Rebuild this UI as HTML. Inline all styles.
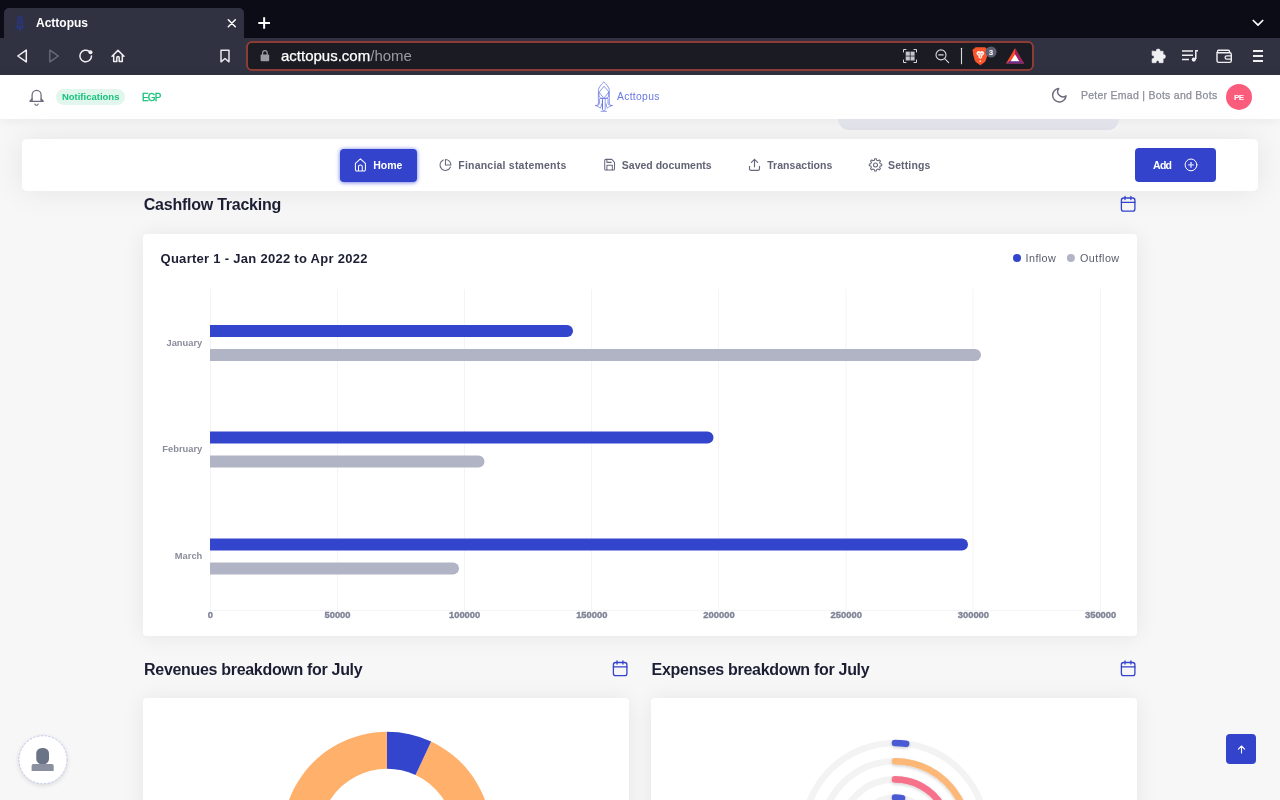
<!DOCTYPE html>
<html>
<head>
<meta charset="utf-8">
<title>Acttopus</title>
<style>
*{box-sizing:border-box;margin:0;padding:0}
html,body{width:1280px;height:800px;overflow:hidden}
body{font-family:"Liberation Sans",sans-serif;background:#f7f7f8;position:relative;color:#1f2235}
.abs{position:absolute}
#tabtitle,#url,svg{will-change:transform}
/* browser chrome */
#tabbar{left:0;top:0;width:1280px;height:38px;background:#0c0c17}
#tab{left:4px;top:8px;width:240px;height:30px;background:#303241;border-radius:5px 5px 0 0}
#tabtitle{left:36px;top:16px;font-size:12px;font-weight:bold;color:#fff;line-height:15px;white-space:nowrap}
#toolbar{left:0;top:37.5px;width:1280px;height:37.5px;background:#303241}
#urlbar{left:246px;top:41px;width:788px;height:30px;background:#1b1c23;border:2px solid #8e3d35;border-radius:6px}
#url{left:281px;top:46px;font-size:15px;line-height:20px;color:#fff;white-space:nowrap;-webkit-text-stroke:.25px #fff}
#url span{color:#9a9ba3;-webkit-text-stroke:0}
/* page */
#header{left:0;top:75px;width:1280px;height:44px;background:#fff;box-shadow:0 1px 12px rgba(0,0,0,.07)}
#lav{left:838px;top:119px;width:281px;height:11px;background:#e3e4ec;border-radius:0 0 11px 11px}
#nav{left:22px;top:139px;width:1236px;height:51.5px;background:#fff;border-radius:5px;box-shadow:0 0 32px rgba(0,0,0,.08)}
.card{background:#fff;border-radius:4px;box-shadow:0 1px 22px rgba(0,0,0,.075)}
.t{white-space:nowrap;position:absolute}
</style>
</head>
<body>
<!-- ===== browser chrome ===== -->
<div id="tabbar" class="abs"></div>
<div id="tab" class="abs"></div>
<div id="toolbar" class="abs"></div>
<div id="tabtitle" class="abs">Acttopus</div>
<div id="urlbar" class="abs"></div>
<div id="url" class="abs">acttopus.com<span>/home</span></div>
<svg class="abs" id="chromeicons" style="left:0;top:0" width="1280" height="75" viewBox="0 0 1280 75" fill="none">
<g stroke-linecap="round" stroke-linejoin="round">
<!-- favicon -->
<g stroke="#2a3996" stroke-width=".850" opacity=".9">
<path d="M17.500 26.500V19.400a2.500 3.700 0 0 1 5 0V26.500"/>
<path d="M18.600 17.600h2.800M18.800 23.300h2.400" stroke-width=".9"/>
<circle cx="20" cy="20.400" r="1.700" stroke-width="1"/>
<path d="M17.500 25.200C17.200 26.800 16.400 27.400 15.600 27.600 18.200 28.200 21.800 28.200 24.400 27.600 23.600 27.400 22.800 26.800 22.500 25.200" fill="#2a3996" fill-opacity=".55"/>
<path d="M20 28.200v2" stroke-width="1.700"/>
</g>
<!-- close -->
<path d="M228.300 19.800l7 7M235.300 19.800l-7 7" stroke="#fff" stroke-width="1.500"/>
<!-- plus -->
<path d="M258.300 23h11.700M264.150 17.150v11.700" stroke="#fff" stroke-width="2" stroke-linecap="butt"/>
<!-- chevron -->
<path d="M1253.300 20.500l4.700 4.700 4.700-4.700" stroke="#fff" stroke-width="1.700"/>
<!-- back -->
<path d="M26.300 50.100v11.800L17.800 56z" stroke="#f0f0f3" stroke-width="1.500"/>
<!-- forward -->
<path d="M49.800 50.100v11.800L58.300 56z" stroke="#6c6e7a" stroke-width="1.300"/>
<!-- reload -->
<path d="M91.500 56a5.800 5.800 0 1 1-2.200-4.550" stroke="#f0f0f3" stroke-width="1.500"/>
<circle cx="90.500" cy="52.200" r="2" fill="#f0f0f3"/>
<!-- home -->
<path d="M112 56.300l6-5.900 6 5.900M113.700 55v6.600h3.100v-3.800a1.200 1.200 0 0 1 2.400 0v3.800h3.100V55" stroke="#f0f0f3" stroke-width="1.500"/>
<!-- bookmark -->
<path d="M221 50.200h8v11.600l-4-3.300-4 3.300z" stroke="#e6e6ea" stroke-width="1.500"/>
<!-- lock -->
<rect x="260.600" y="54.600" width="8.600" height="6.600" rx="1" fill="#9a9ba3"/>
<path d="M262.600 54.600v-1.600a2.300 2.300 0 0 1 4.600 0v1.600" stroke="#9a9ba3" stroke-width="1.200"/>
<!-- qr -->
<g stroke="#d9d9de" stroke-width="1">
<path d="M903.500 52v-2.500h2.500M914 49.500h2.500v2.500M916.500 60v2.500H914M906 62.500h-2.500V60"/>
</g>
<g fill="#c4c4ca"><rect x="905.700" y="51.600" width="4.100" height="4.100"/><rect x="910.500" y="51.600" width="4.100" height="4.100"/><rect x="905.700" y="56.400" width="4.100" height="4.100"/><rect x="910.500" y="56.400" width="4.100" height="4.100"/></g>
<!-- zoom out -->
<g stroke="#d9d9de" stroke-width="1.100"><circle cx="941" cy="54.900" r="5"/><path d="M944.700 58.600l4 4M938.800 54.900h4.400"/></g>
<!-- sep -->
<path d="M961.500 48.300v15.500" stroke="#d9d9de" stroke-width="1.100"/>
<!-- brave -->
<path d="M975.500 47.300h9.600l1.300 1.500 1.200.2.500 2-.7 1.700.3 1-1.800 6.500c-.3 1-.9 1.800-1.700 2.400l-3.900 2.700-3.900-2.700c-.8-.6-1.400-1.400-1.700-2.400l-1.800-6.500.3-1-.7-1.700.5-2 1.200-.2z" fill="#fb542b" stroke="none"/>
<path d="M977.200 51.500l1.800-.5 1.300.7 1.300-.7 1.800.5.900 1.700-.9 1.800-1.500.9.500 1.300-1 .9-1.100.9-1.100-.9-1-.9.500-1.300-1.500-.9-.9-1.800z M980.300 60.200l1 1-1 .9-1-.9z" fill="#fff" stroke="none" opacity=".92"/>
<path d="M978.300 53.600l1.300.4M982.300 53.600l-1.300.4M980.300 55.500v1.800" stroke="#fb542b" stroke-width=".7"/>
<circle cx="991" cy="52" r="5.600" fill="#5e6071"/>
<text x="991" y="54.900" font-family="Liberation Sans, sans-serif" font-size="8" font-weight="bold" fill="#fff" text-anchor="middle">3</text>
<!-- bat -->
<path d="M1015 48.200l-9 15.400h18z" fill="#ff4724" stroke="none"/>
<path d="M1015 48.200v9.500l9 5.900z" fill="#9e1f63" stroke="none"/>
<path d="M1006 63.600l9-5.900 9 5.900z" fill="#662d91" stroke="none"/>
<path d="M1015 54.200l-4.300 7.100h8.600z" fill="#fff" stroke="none"/>
<!-- puzzle -->
<path d="M1156.300 51.300a1.900 1.900 0 1 1 3.700 0h3.100v3.400a1.900 1.900 0 1 1 0 3.700v4.300h-4v-.8a1.500 1.500 0 1 0-3 0v.8h-4v-4a1.700 1.700 0 1 0 0-3.300v-4.100z" fill="#f0f0f3" stroke="#f0f0f3" stroke-width=".6"/>
<!-- playlist -->
<g stroke="#f0f0f3" stroke-width="1.500" stroke-linecap="butt"><path d="M1182 51h11M1182 55.300h11M1182 59.600h7M1195.800 50.500v8.500M1195.100 50.800h2.900"/></g>
<circle cx="1193.800" cy="59.600" r="2.100" fill="#f0f0f3"/>
<!-- wallet -->
<g stroke="#f0f0f3" stroke-width="1.400"><path d="M1217 52.500v8.200a1.700 1.700 0 0 0 1.700 1.700h10.900a1.700 1.700 0 0 0 1.700-1.700V54.500a1.700 1.700 0 0 0-1.700-1.700h-11.200a1.400 1.400 0 0 1 0-2.600h9.700a1.500 1.500 0 0 1 1.500 1.500v1"/><path d="M1231.300 55.800h-4.500a1.700 1.700 0 0 0 0 3.400h4.500" stroke-width="1.300"/></g>
<!-- menu -->
<path d="M1253 51h10M1253 56h10M1253 61h10" stroke="#f0f0f3" stroke-width="1.800" stroke-linecap="butt"/>
</g>
</svg>

<!-- ===== page ===== -->
<div id="header" class="abs"></div>
<div id="lav" class="abs"></div>
<div id="nav" class="abs"></div>

<div id="chartcard" class="abs card" style="left:143px;top:234px;width:994px;height:402px"></div>
<div id="revcard" class="abs card" style="left:143px;top:698px;width:486px;height:120px"></div>
<div id="expcard" class="abs card" style="left:651px;top:698px;width:486px;height:120px"></div>

<svg class="abs" id="pagesvg" style="left:0;top:75px" width="1280" height="725" viewBox="0 75 1280 725" fill="none">
<defs>
<filter id="glow" x="-30%" y="-40%" width="160%" height="180%"><feGaussianBlur stdDeviation="2.2"/></filter>
<filter id="ds" x="-20%" y="-20%" width="140%" height="140%"><feDropShadow dx="0" dy="1.5" stdDeviation="1.5" flood-color="#000" flood-opacity="0.18"/></filter>
<clipPath id="cpRev"><rect x="143" y="698" width="486" height="102"/></clipPath>
</defs>
<g font-family="Liberation Sans, sans-serif">
<!-- header -->
<g id="hdr">
<rect x="56" y="89" width="69" height="16" rx="8" fill="#e1f7ee"/>
<text x="61.9" y="100" font-size="9.5" font-weight="bold" fill="#17c37b">Notifications</text>
<text x="141.9" y="100.6" font-size="10" fill="#17c37b" stroke="#17c37b" stroke-width=".3" letter-spacing="-0.8">EGP</text>
<text x="1080.9" y="99.1" font-size="10.5" fill="#8b8d99" stroke="#8b8d99" stroke-width=".25" letter-spacing="0.276">Peter Emad | Bots and Bots</text>
<circle cx="1239" cy="96.9" r="13" fill="#fb5c7c"/>
<text x="1234" y="99.8" font-size="8" font-weight="bold" fill="#fff" letter-spacing="-0.6">PE</text>
</g>
<!-- nav -->
<g id="navg">
<rect x="340" y="149.5" width="77" height="33" rx="4" fill="#4656dc" opacity=".85" filter="url(#glow)"/>
<rect x="340" y="149" width="77" height="33" rx="4" fill="#3343cb"/>
<text x="373.25" y="169.2" font-size="10.5" font-weight="bold" fill="#fff" letter-spacing="0">Home</text>
<g font-size="10.5" font-weight="bold" fill="#626375">
<text x="458.25" y="169.2" letter-spacing="0.216">Financial statements</text>
<text x="621.8" y="169.2" letter-spacing="0">Saved documents</text>
<text x="767.2" y="169.2" letter-spacing="0.036">Transactions</text>
<text x="888" y="169.2" letter-spacing="0.13">Settings</text>
</g>
<rect x="1135" y="148" width="81" height="34" rx="4" fill="#3343cb"/>
<text x="1153" y="169" font-size="10.5" font-weight="bold" fill="#fff" letter-spacing="-0.7">Add</text>
</g>
<!-- headings -->
<g font-weight="bold" fill="#1c1f33">
<text x="143.75" y="210" font-size="16" letter-spacing="-0.24">Cashflow Tracking</text>
<text x="160.5" y="263" font-size="13" letter-spacing="0.283">Quarter 1 - Jan 2022 to Apr 2022</text>
<text x="144.1" y="674.75" font-size="16" letter-spacing="-0.315">Revenues breakdown for July</text>
<text x="651.6" y="674.75" font-size="16" letter-spacing="-0.30">Expenses breakdown for July</text>
</g>
<!-- legend -->
<circle cx="1017" cy="258.1" r="4" fill="#3445cd"/>
<circle cx="1070.9" cy="258.1" r="4" fill="#b1b4c4"/>
<g font-size="10.8" fill="#5a5c6d">
<text x="1025.6" y="261.9" letter-spacing="0.4">Inflow</text>
<text x="1080" y="261.9" letter-spacing="0.42">Outflow</text>
</g>
<!-- chart -->
<g id="chart">
<g stroke="#f4f4f6" stroke-width="1">
<path d="M210.5 289V610M337.5 289V610M464.5 289V610M591.5 289V610M718.5 289V610M846 289V610M973 289V610M1100.5 289V610"/>
<path d="M210 610.5H1100.5"/>
</g>
<g fill="#3445cd">
<path d="M210 325h357a6 6 0 0 1 0 12H210z"/>
<path d="M210 431.5h497.500a6 6 0 0 1 0 12H210z"/>
<path d="M210 538.500h752a6 6 0 0 1 0 12H210z"/>
</g>
<g fill="#b1b4c4">
<path d="M210 349h765a6 6 0 0 1 0 12H210z"/>
<path d="M210 455.500h268.500a6 6 0 0 1 0 12H210z"/>
<path d="M210 562.500h243a6 6 0 0 1 0 12H210z"/>
</g>
<g font-size="8.2" font-weight="bold" fill="#8b8d9b" text-anchor="end">
<text transform="translate(202.3 345.8) scale(1.14 1)">January</text>
<text transform="translate(202.3 452) scale(1.14 1)">February</text>
<text transform="translate(202.3 558.8) scale(1.14 1)">March</text>
</g>
<g font-size="9" font-weight="bold" fill="#7f8396" stroke="#7f8396" stroke-width=".35" text-anchor="middle">
<text transform="translate(210.3 618) scale(1.045 1)">0</text>
<text transform="translate(337.5 618) scale(1.045 1)">50000</text>
<text transform="translate(464.6 618) scale(1.045 1)">100000</text>
<text transform="translate(591.8 618) scale(1.045 1)">150000</text>
<text transform="translate(719 618) scale(1.045 1)">200000</text>
<text transform="translate(846.2 618) scale(1.045 1)">250000</text>
<text transform="translate(973.4 618) scale(1.045 1)">300000</text>
<text transform="translate(1100.6 618) scale(1.045 1)">350000</text>
</g>
</g>


<!-- page icons -->
<g id="picons" fill="none" stroke-linecap="round" stroke-linejoin="round">
<!-- bell -->
<g stroke="#6b6a7c" stroke-width="1.25" transform="translate(0 0.5)">
<path d="M32.100 100.400v-5.900a4.500 4.700 0 0 1 9 0v5.900"/>
<path d="M30 100.800h13.200l-2-2.300M30 100.800l2-2.300" stroke-width="1.350"/>
<path d="M34.800 103.500a1.800 1.800 0 0 0 3.400 0" stroke-width="1.100"/>
</g>
<!-- moon -->
<path transform="translate(1050.4 86.300) scale(0.745)" d="M21 12.790A9 9 0 1 1 11.210 3 7 7 0 0 0 21 12.790z" stroke="#6b6a7c" stroke-width="1.950"/>
<!-- logo -->
<g stroke="#4f60de" stroke-width="0.750" opacity=".85">
<path d="M598.400 103.500V90.300C598.400 87.500 601.500 84 603.800 82 606.100 84 609.300 87.500 609.300 90.300V103.500"/>
<path d="M603.800 86.500L599 92.300 603.800 98.200 608.600 92.300Z"/>
<path d="M599 92.300V96C599 97.500 601.500 98.400 603.800 98.400 606.100 98.400 608.600 97.500 608.600 96V92.300"/>
<path d="M600.200 98.500H607.500"/>
<path d="M602.400 98.800V109.500L603.800 111 605.200 109.500V98.800" />
<path d="M602.500 100V109" stroke-width="1"/>
<path d="M601 111.300H606.600"/>
<path d="M599.600 99V103.500C599.600 105 597 105.500 595.200 105.500 597.500 106 599 107 600.200 108.200 601 107 601.600 105.500 601.600 104"/>
<path d="M608 99V103.500C608 105 610.600 105.500 612.500 105.500 610.200 106 608.600 107 607.500 108.200 606.700 107 606.100 105.500 606.100 104"/>
<path d="M598.400 103.500C598.400 105 597 105.600 596 105.600M609.300 103.500C609.300 105 610.700 105.600 611.700 105.600" opacity=".7"/>
</g>
<text x="617" y="99.700" font-size="10.300" fill="#4f60de" opacity=".85" stroke="none" letter-spacing="0.33">Acttopus</text>
<!-- nav: home -->
<path d="M355.400 163.400L360.400 158.900 365.400 163.400V169.600A1.400 1.400 0 0 1 364 171H356.800A1.400 1.400 0 0 1 355.400 169.600Z M358.500 171V166.800A1.900 1.900 0 0 1 362.300 166.800V171" stroke="#fff" stroke-width="1.050"/>
<g stroke="#66677a" stroke-width="1.050">
<!-- pie -->
<path transform="translate(438.900 158.400) scale(0.545)" d="M21.210 15.890A10 10 0 1 1 8 2.830" stroke-width="1.900"/>
<path transform="translate(438.900 158.400) scale(0.545)" d="M22 12A10 10 0 0 0 12 2v10z" stroke-width="1.900"/>
<!-- save -->
<g transform="translate(603.070 157.600) scale(0.545 0.594)" stroke-width="1.850">
<path d="M19 21H5a2 2 0 0 1-2-2V5a2 2 0 0 1 2-2h11l5 5v11a2 2 0 0 1-2 2z"/><path d="M17 21v-8H7v8"/><path d="M7 3v5h8"/>
</g>
<!-- upload -->
<path d="M749.500 166.400v2.300a1.600 1.600 0 0 0 1.600 1.600h6.800a1.600 1.600 0 0 0 1.600-1.600v-2.300M754.500 166.800v-7.400M751.400 162.400l3.100-3.100 3.100 3.100" stroke-width="1.150"/>
<!-- gear -->
<path d="M874.67 158.71L876.33 158.71L876.63 160.18L878.03 160.76L879.29 159.93L880.47 161.11L879.64 162.37L880.22 163.77L881.69 164.07L881.69 165.73L880.22 166.03L879.64 167.43L880.47 168.69L879.29 169.87L878.03 169.04L876.63 169.62L876.33 171.09L874.67 171.09L874.37 169.62L872.97 169.04L871.71 169.87L870.53 168.69L871.36 167.43L870.78 166.03L869.31 165.73L869.31 164.07L870.78 163.77L871.36 162.37L870.53 161.11L871.71 159.93L872.97 160.76L874.37 160.18Z" stroke-width="1.050"/>
<circle cx="875.500" cy="164.900" r="2"/>
</g>
<!-- plus circle -->
<circle cx="1191" cy="164.900" r="5.900" stroke="#fff" stroke-width="1"/>
<path d="M1188.200 164.900h5.600M1191 162.100v5.600" stroke="#d8dcf6" stroke-width="1.400" stroke-linecap="butt"/>
<!-- calendars -->
<g stroke="#3343cb" stroke-width="1.300">
<g id="cal"><rect x="1121.400" y="198" width="13.500" height="13.100" rx="2.200"/><path d="M1121.400 202.400h13.500M1125 196.300v3.200M1130.900 196.300v3.200"/></g>
<use href="#cal" transform="translate(0 464.500)"/>
<use href="#cal" transform="translate(-508 464.500)"/>
</g>
</g>
<!-- donut -->
<g id="donut">
<path d="M431.16 741.59A104.5 104.5 0 1 1 386.98 731.80L386.99 768.80A67.5 67.5 0 1 0 415.53 775.12Z" fill="#ffb06b"/>
<path d="M387.00 731.80A104.5 104.5 0 0 1 431.16 741.59L415.53 775.12A67.5 67.5 0 0 0 387.00 768.80Z" fill="#3445cd"/>
</g>

<!-- radial -->
<g id="radial" fill="none" transform="translate(1 -0.6)">
<g stroke="#f3f3f4" stroke-width="6.6"><circle cx="894" cy="835" r="91.4"/><circle cx="894" cy="835" r="73.2"/><circle cx="894" cy="835" r="55"/><circle cx="894" cy="835" r="36.8"/></g>
<g stroke-width="6.6" stroke-linecap="round" filter="url(#ds)">
<path d="M894.00 743.60A91.4 91.4 0 0 1 905.14 744.28" stroke="#4a5ad3"/>
<path d="M894.00 761.80A73.2 73.2 0 0 1 957.39 871.60" stroke="#fdb877"/>
<path d="M894.00 780.00A55 55 0 0 1 941.63 862.50" stroke="#f7718b"/>
<path d="M894.00 798.20A36.8 36.8 0 0 1 901.02 798.88" stroke="#4a5ad3"/>
</g>
</g>

<!-- floating -->
<g id="float">
<circle cx="43" cy="761" r="25" fill="#000" opacity=".10" filter="url(#glow)"/>
<circle cx="43" cy="759.75" r="24" fill="#fff" stroke="#b4bcf2" stroke-width=".8" stroke-dasharray="2.2 1.6"/>
<rect x="36.25" y="747.9" width="12.75" height="16.6" rx="5.6" fill="#6b7387"/>
<path d="M31.6 771v-5.200a1.800 1.800 0 0 1 1.800-1.800h18.500a1.800 1.800 0 0 1 1.800 1.800V771z" fill="#8a90a0"/>
<rect x="1226" y="734" width="30" height="30" rx="4" fill="#3343cb"/>
<path d="M1241.500 753v-6.800M1238.400 749.100l3.100-3.100 3.100 3.100" stroke="#fff" stroke-width="1.100" stroke-linecap="round" stroke-linejoin="round"/>
</g>
</g>
</svg>
</body>
</html>
